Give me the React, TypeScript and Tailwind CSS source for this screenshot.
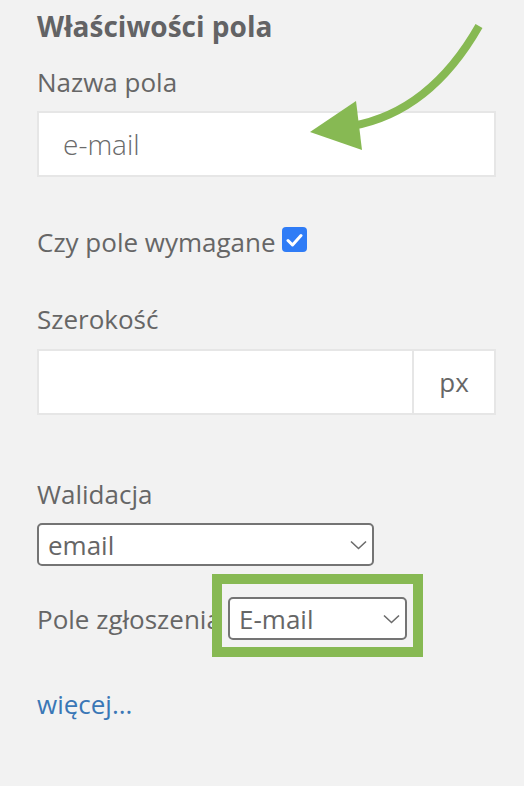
import React from "react";

const Chevron = () => (
  <svg width="17" height="10" viewBox="0 0 17 10" fill="none">
    <path d="M1 1.5 L8.5 8.5 L16 1.5" stroke="#6b6b6b" strokeWidth="1.6" />
  </svg>
);

export default function App() {
  return (
    <div
      className="relative w-[524px] h-[786px] bg-[#f2f2f2] text-[#666666] overflow-hidden"
      style={{ fontFamily: "'Open Sans', 'Noto Sans', sans-serif" }}
    >
      <div className="flex flex-col pl-[37px] pr-[28px] pt-[8px]">
        <h2 className="text-[28px] leading-[36px] font-bold text-[#636365]">Właściwości pola</h2>
        <label className="mt-[23px] text-[26px] leading-[30px]">Nazwa pola</label>
        <div className="mt-[14px] h-[66px] bg-white border-2 border-[#e6e6e6] flex items-center pl-[24px]">
          <span className="text-[28px] font-light text-[#6a6a6a]">e-mail</span>
        </div>
        <div className="mt-[50px] flex items-start">
          <span className="text-[26px] leading-[30px]">Czy pole wymagane</span>
          <span className="ml-[6px] w-[25px] h-[25px] rounded-[4px] bg-[#2f7cf6] flex items-center justify-center">
            <svg width="17" height="14" viewBox="0 0 17 14" fill="none">
              <path d="M2 7.5 L6.5 12 L15 2.5" stroke="white" strokeWidth="3" strokeLinecap="round" strokeLinejoin="round" />
            </svg>
          </span>
        </div>
        <label className="mt-[47px] text-[26px] leading-[30px]">Szerokość</label>
        <div className="mt-[15px] h-[66px] flex border-2 border-[#e6e6e6] bg-white">
          <div className="flex-1" />
          <div className="w-[82px] border-l-2 border-[#e6e6e6] flex items-center justify-center text-[26px]">px</div>
        </div>
        <label className="mt-[64px] text-[26px] leading-[30px]">Walidacja</label>
        <div className="mt-[14px] w-[337px] h-[43px] border-2 border-[#747474] rounded-[5px] bg-white flex items-center justify-between pl-[9px] pr-[5px]">
          <span className="text-[26px] leading-none">email</span>
          <Chevron />
        </div>
        <div className="relative mt-[31px] flex items-center h-[43px]">
          <span className="text-[26px] leading-[30px] whitespace-nowrap">Pole zgłoszenia</span>
          <div className="absolute left-[191px] top-0 w-[179px] h-[43px] border-2 border-[#747474] rounded-[5px] bg-white flex items-center justify-between pl-[9px] pr-[5px]">
            <span className="text-[26px] leading-none">E-mail</span>
            <Chevron />
          </div>
          <div className="absolute left-[175px] top-[-23px] w-[211px] h-[83px] border-[10px] border-[#87b953] pointer-events-none" />
        </div>
        <a className="mt-[49px] text-[26px] leading-[30px] text-[#3a77b6]">więcej...</a>
      </div>
      <svg className="absolute left-0 top-0 pointer-events-none" width="524" height="786" viewBox="0 0 524 786">
        <path d="M479 26 Q 430 112 352 126" stroke="#87b953" strokeWidth="8" fill="none" />
        <polygon points="310,132 356,101 362,150" fill="#87b953" />
      </svg>
    </div>
  );
}
